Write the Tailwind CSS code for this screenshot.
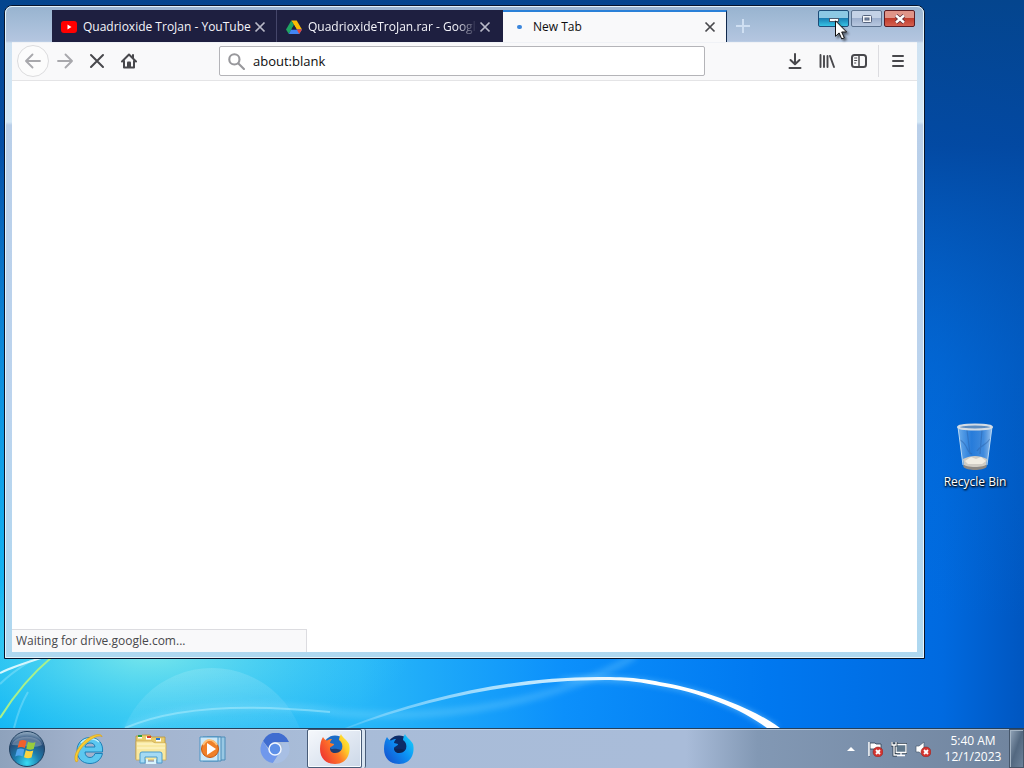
<!DOCTYPE html>
<html lang="en">

<head>
    <meta charset="UTF-8">
    <meta name="viewport" content="width=device-width, initial-scale=1.0">
    <title>New Tab</title>
    <script src="https://cdn.jsdelivr.net/npm/@tailwindcss/browser@4"></script>
</head>

<body class="h-screen flex flex-col overflow-hidden text-xs font-['Open_Sans','Noto_Sans',sans-serif]">
    <!-- Desktop -->
    <main class="relative flex-1 min-h-0 overflow-hidden bg-[#0068d8]">
        <svg class="absolute inset-0 w-full h-full" viewBox="0 0 1024 728" preserveAspectRatio="none" aria-hidden="true">
            <defs>
                <linearGradient id="sea" x1="0" x2="1" y1="0" y2="0">
                    <stop offset="0" stop-color="#14b8f4" />
                    <stop offset=".13" stop-color="#2ec4f4" />
                    <stop offset=".35" stop-color="#28b8f8" />
                    <stop offset=".55" stop-color="#0c90fb" />
                    <stop offset=".75" stop-color="#0078f0" />
                    <stop offset=".92" stop-color="#006ae0" />
                    <stop offset="1" stop-color="#0056c0" />
                </linearGradient>
                <linearGradient id="deep" x1="0" x2="0" y1="0" y2="1">
                    <stop offset="0" stop-color="#04458e" />
                    <stop offset=".2" stop-color="#0348a0" stop-opacity=".95" />
                    <stop offset=".5" stop-color="#0460c4" stop-opacity=".5" />
                    <stop offset=".85" stop-color="#0470d8" stop-opacity="0" />
                </linearGradient>
                <radialGradient id="glow">
                    <stop offset="0" stop-color="#8cf0e8" stop-opacity=".75" />
                    <stop offset="1" stop-color="#50d8f4" stop-opacity="0" />
                </radialGradient>
                <linearGradient id="arc" x1="0" x2="1" y1="0" y2="0">
                    <stop offset="0" stop-color="#fff" stop-opacity=".15" />
                    <stop offset=".35" stop-color="#e0f8ff" stop-opacity=".75" />
                    <stop offset=".7" stop-color="#fff" />
                </linearGradient>
                <linearGradient id="dome" x1="0" x2="0" y1="0" y2="1">
                    <stop offset="0" stop-color="#fff" stop-opacity=".14" />
                    <stop offset=".4" stop-color="#fff" stop-opacity=".03" />
                </linearGradient>
                <filter id="soft"><feGaussianBlur stdDeviation="3" /></filter>
                <filter id="edge"><feGaussianBlur stdDeviation="0.700" /></filter>
            </defs>
            <rect width="1024" height="728" fill="url(#sea)" />
            <rect width="1024" height="728" fill="url(#deep)" />
            <ellipse cx="150" cy="655" rx="260" ry="90" fill="url(#glow)" />
            <circle cx="212" cy="762" r="94" fill="url(#dome)" filter="url(#edge)" />
            <path d="M125 728C190 700 290 704 340 713C450 722 560 700 635 656" fill="none" stroke="#9de4ff" stroke-width="6" opacity=".3" filter="url(#soft)" />
            <path d="M125 728C170 708 240 703 330 712" fill="none" stroke="#c8f6ff" stroke-width="2" opacity=".4" filter="url(#edge)" />
            <path d="M560 679C600 676 635 678 660 683C705 690 750 708 779 728L768 728C740 708 700 692 655 685C625 680 590 680 560 681Z" fill="#8ed8ff" filter="url(#soft)" opacity=".8" />
            <path d="M345 728C430 694 520 676 605 677C635 677 650 680 665 683C708 691 752 708 780 728L767 728C740 708 700 692 655 685C635 681 620 680 605 680C520 680 430 698 349 728Z" fill="url(#arc)" filter="url(#edge)" />
            <path d="M0 673C12 667 28 662 44 657" fill="none" stroke="#e8fcff" stroke-width="2" opacity=".9" />
            <path d="M0 718C16 692 34 672 52 657" fill="none" stroke="#a8f08c" stroke-width="2" />
            <path d="M0 684C12 672 24 665 32 660M14 728C18 712 22 702 28 692" fill="none" stroke="#bff4ff" stroke-width="2" opacity=".3" filter="url(#edge)" />
        </svg>

        <!-- Browser window -->
        <section class="absolute left-1 top-[5px] right-[99px] bottom-[69px] rounded-t-lg border border-[#06142c] bg-[#b6d6f0]" aria-label="Firefox">
            <div class="h-full flex flex-col rounded-t-[7px] border border-[#e4f4fc] px-[6px] pb-[5px] bg-[linear-gradient(180deg,#98b4d0_0px,#b4c6e0_34px,#cfe2f2_36px,#d4e8f6_115px,#b9cfe9_118px,#bcd4ee_400px,#aed8f0_100%)]">
                <header class="h-[35px] shrink-0 flex items-end">
                    <div class="h-8 ml-10 flex" role="tablist">
                        <div class="w-[225px] flex items-center pl-[9px] pt-px pr-2 bg-[#1e1f40] border-r border-[#45466a] text-[#f4f4fa]">
                            <svg class="w-4 h-4 shrink-0" viewBox="0 0 16 16"><rect y="2" width="16" height="12" rx="3" fill="#f00" /><path d="M6.500 5.500v5l4-2.500z" fill="#fff" /></svg>
                            <span class="ml-[6px] flex-1 whitespace-nowrap">Quadrioxide TroJan - YouTube</span>
                            <button class="w-4 h-4" aria-label="Close tab"><svg viewBox="0 0 16 16"><path d="M3.500 3.500l9 9M12.500 3.500l-9 9" stroke="#b9b9c8" stroke-width="1.700" /></svg></button>
                        </div>
                        <div class="w-[226px] flex items-center pl-[9px] pt-px pr-[10px] bg-[#1e1f40] text-[#f4f4fa]">
                            <svg class="w-4 h-4 shrink-0" viewBox="0 0 16 16"><path d="M5.300 1.500h5.400L16 10.500h-5.200z" fill="#fbbc04" /><path d="M5.300 1.500L8 6 2.800 15 0 10.500z" fill="#1fa463" /><path d="M5.300 10.500H16L13.200 15H2.800z" fill="#4285f4" /><path d="M10.800 10.500H16L13.200 15z" fill="#ea4335" /><path d="M5.300 10.500L8 6l2.700 4.500z" fill="#1e1f40" /></svg>
                            <span class="ml-[6px] w-0 flex-1 overflow-hidden whitespace-nowrap mask-r-from-88% mask-r-to-100%">QuadrioxideTroJan.rar - Google</span>
                            <button class="w-4 h-4" aria-label="Close tab"><svg viewBox="0 0 16 16"><path d="M3.500 3.500l9 9M12.500 3.500l-9 9" stroke="#b9b9c8" stroke-width="1.700" /></svg></button>
                        </div>
                        <div class="w-[224px] flex items-center pl-[14px] pr-2 bg-[#f9f9fa] border-t-2 border-r border-t-[#2a80d8] border-r-[#10284c] text-[#0c0c0d]">
                            <span class="w-[5px] h-1 rounded-full bg-[#3a86dc]"></span>
                            <span class="ml-[11px] flex-1">New Tab</span>
                            <button class="w-4 h-4" aria-label="Close tab"><svg viewBox="0 0 16 16"><path d="M3.500 3.500l9 9M12.500 3.500l-9 9" stroke="#48484c" stroke-width="1.700" /></svg></button>
                        </div>
                    </div>
                    <button class="h-8 w-8 flex items-center justify-center" aria-label="New tab">
                        <svg class="w-4 h-4" viewBox="0 0 16 16"><path d="M8 1v14M1 8h14" stroke="#cfdff2" stroke-width="2" /></svg>
                    </button>
                    <div class="ml-auto mr-[2px] mb-[15px] flex gap-[2px]">
                        <button class="w-[31px] h-[17px] rounded-xs border border-[#1d4c78] bg-linear-to-b from-[#8cc8e4] from-45% via-[#1a7fb4] via-50% to-[#38c4e4] flex items-center justify-center" aria-label="Minimize">
                            <svg class="w-3 h-2" viewBox="0 0 12 8"><rect x="1.500" y="3.500" width="9" height="3" fill="#fff" stroke="#4a5a70" /></svg>
                        </button>
                        <button class="w-[31px] h-[17px] rounded-xs border border-[#5d7390] bg-linear-to-b from-[#c4d2e6] from-45% via-[#9db0ce] via-50% to-[#b8c8e0] flex items-center justify-center" aria-label="Maximize">
                            <svg class="w-3 h-[10px]" viewBox="0 0 12 10"><rect x="1.500" y="1.500" width="9" height="7" rx="1" fill="#f4f6fa" stroke="#56647e" /><rect x="4" y="4" width="4" height="2" fill="#8496b4" stroke="#56647e" /></svg>
                        </button>
                        <button class="w-[31px] h-[17px] rounded-xs border border-[#5a1c24] bg-linear-to-b from-[#e09488] from-45% via-[#c03c2c] via-50% to-[#d46050] flex items-center justify-center" aria-label="Close">
                            <svg class="w-3 h-[10px]" viewBox="0 0 12 10"><path d="M2 1.500l8 7M10 1.500l-8 7" stroke="#5a2c38" stroke-width="4" /><path d="M2 1.500l8 7M10 1.500l-8 7" stroke="#fff" stroke-width="2.400" /></svg>
                        </button>
                    </div>
                </header>

                <nav class="h-[39px] shrink-0 flex items-center pl-[5px] pr-[3px] pb-px bg-[#f9f9fa] border-t border-b border-t-[#f0f2f6] border-b-[#e4e4e6] text-[#48484c]">
                    <button class="w-8 h-8 shrink-0 rounded-full border border-[#dcdcde] bg-[#fcfcfc] text-[#a8a8ac] flex items-center justify-center" aria-label="Back">
                        <svg class="w-4 h-4" viewBox="0 0 16 16" fill="none" stroke="currentColor" stroke-width="1.800" stroke-linecap="round" stroke-linejoin="round"><path d="M15 8H1.500M7.500 1.500L1 8l6.500 6.500" /></svg>
                    </button>
                    <button class="w-8 h-8 shrink-0 text-[#a8a8ac] flex items-center justify-center" aria-label="Forward">
                        <svg class="w-4 h-4" viewBox="0 0 16 16" fill="none" stroke="currentColor" stroke-width="1.800" stroke-linecap="round" stroke-linejoin="round"><path d="M1 8h13.500M8.500 1.500L15 8l-6.500 6.500" /></svg>
                    </button>
                    <button class="w-8 h-8 shrink-0 flex items-center justify-center" aria-label="Stop">
                        <svg class="w-4 h-4" viewBox="0 0 16 16" fill="none" stroke="currentColor" stroke-width="2" stroke-linecap="round"><path d="M2 2l12 12M14 2L2 14" /></svg>
                    </button>
                    <button class="w-8 h-8 shrink-0 flex items-center justify-center" aria-label="Home">
                        <svg class="w-4 h-4" viewBox="0 0 16 16" fill="none" stroke="currentColor" stroke-width="2" stroke-linecap="round" stroke-linejoin="round"><path d="M1 8.500L8 1.500l7 7M3 8v6.500h10V8" /><path d="M6 14V9.500a1 1 0 011-1h2a1 1 0 011 1V14z" fill="currentColor" stroke="none" /><path d="M12 2v3" /></svg>
                    </button>
                    <label class="h-[30px] flex-1 mx-[74px] px-2 flex items-center gap-2 bg-white border border-[#b4b4b8] rounded-xs">
                        <svg class="w-[17px] h-[17px] shrink-0 text-[#98989c]" viewBox="0 0 16 16" fill="none" stroke="currentColor" stroke-width="2" stroke-linecap="round"><circle cx="6" cy="6" r="4.800" /><path d="M9.800 9.800L15 15" /></svg>
                        <input class="flex-1 min-w-0 pt-[2px] text-[13px] text-[#0c0c0d] outline-none" type="text" value="about:blank" aria-label="Address">
                    </label>
                    <button class="w-8 h-8 shrink-0 flex items-center justify-center" aria-label="Downloads">
                        <svg class="w-4 h-4" viewBox="0 0 16 16" fill="none" stroke="currentColor" stroke-width="2" stroke-linecap="round" stroke-linejoin="round"><path d="M8 1v10M3.500 7L8 11.200 12.500 7M2.500 15h11" /></svg>
                    </button>
                    <button class="w-8 h-8 shrink-0 flex items-center justify-center" aria-label="Library">
                        <svg class="w-4 h-4" viewBox="0 0 16 16" fill="none" stroke="currentColor" stroke-width="1.900" stroke-linecap="round"><path d="M1.500 2v12M5 3v11M8.500 3v11M11 3l4 11" /></svg>
                    </button>
                    <button class="w-8 h-8 shrink-0 flex items-center justify-center" aria-label="Sidebars">
                        <svg class="w-4 h-4" viewBox="0 0 16 16" fill="none" stroke="currentColor" stroke-width="2"><rect x="1" y="2" width="14" height="12" rx="2.500" /><path d="M8 2v12" stroke-width="1.500" /><path d="M3.200 5h3M3.200 7.500h3M3.200 10h2" stroke-width="1.200" /></svg>
                    </button>
                    <span class="mx-[3px] w-px h-8 bg-[#dcdce0]"></span>
                    <button class="w-8 h-8 shrink-0 flex items-center justify-center" aria-label="Menu">
                        <svg class="w-4 h-4" viewBox="0 0 16 16" stroke="currentColor" stroke-width="2" stroke-linecap="round"><path d="M3 3h10M3 8h10M3 13h10" /></svg>
                    </button>
                </nav>

                <div class="relative flex-1 min-h-0 bg-white">
                    <p class="absolute left-0 bottom-0 w-[295px] h-[23px] pl-1 flex items-center bg-[#f9f9fa] border-t border-r border-[#dcdce0] text-[#48484c]">Waiting for drive.google.com...</p>
                </div>
            </div>
        </section>

        <!-- Desktop shortcut -->
        <a href="#" class="absolute right-2 top-[422px] w-[82px] flex flex-col items-center text-white [text-shadow:0_1px_2px_#000,1px_1px_2px_#000]">
            <svg class="w-[38px] h-12" viewBox="0 0 38 48">
                <defs>
                    <linearGradient id="glass"><stop offset="0" stop-color="#a8d4f8" stop-opacity=".65" /><stop offset=".4" stop-color="#4c94e4" stop-opacity=".5" /><stop offset=".75" stop-color="#80b4ec" stop-opacity=".5" /><stop offset="1" stop-color="#c4def6" stop-opacity=".8" /></linearGradient>
                </defs>
                <path d="M2 5l5 38c2 4 22 4 24 0l5-38z" fill="url(#glass)" />
                <path d="M7 37c8-4 16-4 24 0l-1 6c-2 4-20 4-22 0z" fill="#d0ccc4" />
                <path d="M9 39l6-4 5 2 5-2 5 4-4 3H12z" fill="#f0ece2" />
                <path d="M7 42c2 4 22 4 24 0l-.5 3c-3 4-20 4-23 0z" fill="#8c8884" />
                <path d="M4 18c8 4 6 12 12 14M34 17c-4 6-10 7-13 12M11 8l3 24M26 8l-2 24" fill="none" stroke="#2b64ac" stroke-width="1.200" opacity=".5" />
                <path d="M2 5l5 38M36 5l-5 38" stroke="#b8d8f4" stroke-width="1" />
                <ellipse cx="19" cy="5" rx="17" ry="2.500" fill="#5c8cc0" stroke="#d4dce4" stroke-width="2" />
            </svg>
            <span class="mt-1">Recycle Bin</span>
        </a>

        <!-- Mouse pointer -->
        <svg class="absolute right-[177px] top-[20px] w-3 h-[20px] overflow-visible drop-shadow-[2px_2px_1px_rgba(0,0,0,0.5)]" viewBox="0 0 12 20" aria-hidden="true">
            <path d="M.5.800v15.500l3.600-3.400 2.600 6 2.600-1.100-2.600-5.800h4.900z" fill="#fff" stroke="#111" />
        </svg>
    </main>

    <!-- Taskbar -->
    <footer class="h-10 shrink-0 flex items-stretch border-t border-[#24405c] bg-[linear-gradient(90deg,#8ea2bc_0%,#a2b2cc_8%,#a8bcd8_30%,#a9bcd9_67%,#8298b4_74%,#70849e_100%)] shadow-[inset_0_1px_0_rgba(220,236,248,0.5)]">
        <button class="w-[54px] shrink-0 flex items-center justify-center" aria-label="Start">
            <svg class="w-[38px] h-[38px]" viewBox="0 0 38 38">
                <defs>
                    <radialGradient id="orb" cx=".5" cy=".9" r=".9"><stop offset="0" stop-color="#38dcf4" /><stop offset=".4" stop-color="#1c7cac" /><stop offset=".75" stop-color="#264c78" /><stop offset="1" stop-color="#9cb4c8" /></radialGradient>
                </defs>
                <circle cx="19" cy="19" r="17.500" fill="url(#orb)" stroke="#204060" />
                <path d="M4 15C7 4 31 4 34 15C26 19 13 15 4 15z" fill="#fff" opacity=".25" />
                <path d="M11.500 11c2.500-1.500 4.500-1.300 7 0l-1.700 7c-2.500-1.300-4.500-1.500-7.300-.2z" fill="#f0602c" />
                <path d="M20 11.800c2.500 1.300 5 1.400 7.500.200l-1.800 7c-2.600 1.200-4.800 1-7.400-.3z" fill="#98cc3c" />
                <path d="M9 19.500c2.600-1.400 4.800-1.200 7.300 0l-1.700 7c-2.500-1.300-4.800-1.400-7.400 0z" fill="#50a4ec" />
                <path d="M17.800 20.200c2.500 1.300 5 1.500 7.500.300l-1.800 7c-2.600 1.200-5 1-7.500-.3z" fill="#fcd440" />
            </svg>
        </button>
        <div class="ml-[5px] flex gap-[2px]">
            <button class="w-[60px] flex items-center justify-center" aria-label="Internet Explorer">
                <svg class="w-8 h-8" viewBox="0 0 32 32">
                    <path d="M29.500 20.500C28 27 23 30.500 17 30.500C9 30.500 4 25 4 17.500C4 10 9.500 4.500 17 4.500C25.500 4.500 30.500 10.500 29.500 19H12c0 3.500 2 5.500 5 5.500c2.500 0 4-1.500 5-4zM12 14h10c-.5-3-2-4-5-4s-4.500 1.500-5 4z" fill="#5cc8f0" stroke="#1c80b8" />
                    <path d="M8 10c4-5 13-6 18-1" stroke="#c0f0fc" stroke-width="1.500" fill="none" />
                    <path d="M3 29C-1 23 6 12 14 6C21 1 29 0 29 4c-1-2-7-1-13 4C9 13 2 22 5 28z" fill="#f8cc30" stroke="#d89c18" stroke-width=".6" />
                </svg>
            </button>
            <button class="w-[60px] flex items-center justify-center" aria-label="Windows Explorer">
                <svg class="w-8 h-8" viewBox="0 0 32 32">
                    <path d="M1 3h5l1-1h8l2 2h13v22H1z" fill="#e8cc6c" stroke="#b89440" stroke-width=".8" />
                    <path d="M3 4h4M11 5h5M21 7h5" stroke="#fff" stroke-width="3" />
                    <path d="M3 3h4" stroke="#2c9c3c" stroke-width="2" /><path d="M12 4h4" stroke="#d83c2c" stroke-width="2" /><path d="M21 6h4" stroke="#2c78d0" stroke-width="2" />
                    <path d="M1 8h16l3 2h11v17H1z" fill="#f8e8a0" stroke="#cca850" stroke-width=".8" />
                    <path d="M2 11h28M2 15h28" stroke="#fff8d0" />
                    <path d="M5 30V21q0-2 2-2h18q2 0 2 2v9h-5v-6H10v6z" fill="#a4daf4" stroke="#4c9ccc" />
                    <path d="M12 26v4h8v-4" fill="none" stroke="#d8f4fc" stroke-width="2" />
                </svg>
            </button>
            <button class="w-[60px] flex items-center justify-center" aria-label="Windows Media Player">
                <svg class="w-8 h-8" viewBox="0 0 32 32">
                    <path d="M10 4h18v23H10z" fill="#98c8e4" stroke="#4c8cb8" /><path d="M6 4h18v24H6z" fill="#b8dcf0" stroke="#4c8cb8" /><path d="M3 4h18v24H3z" fill="#cce8f8" stroke="#4c94c4" />
                    <circle cx="13" cy="16" r="8.500" fill="#f08028" stroke="#c85810" />
                    <path d="M6 12C10 5 16 6 20 12" fill="none" stroke="#fcc078" stroke-width="2" />
                    <path d="M10 10v12l9-6z" fill="#fff" />
                </svg>
            </button>
            <button class="w-[60px] flex items-center justify-center" aria-label="Chromium">
                <svg class="w-8 h-8" viewBox="0 0 32 32">
                    <path d="M4 8A14 14 0 0130 9H16a6 6 0 00-5 8z" fill="#3f6cd0" />
                    <path d="M4 8A14 14 0 0014 30L21 19.500a6 6 0 01-10-.5z" fill="#7098ec" />
                    <path d="M22 10h7A14 14 0 0114 30l7-11a6 6 0 001-9z" fill="#a8bfe4" />
                    <circle cx="16" cy="16" r="6" fill="#5e90e8" stroke="#f0f6ff" stroke-width="1.500" />
                </svg>
            </button>
            <button class="w-[60px] flex items-stretch" aria-label="Firefox">
                <span class="w-[55px] flex items-center justify-center rounded-xs border border-[#485c78] bg-linear-to-br from-[#f6f8fc] to-[#ccd8e8] shadow-[inset_0_0_0_1px_#f8fcff]">
                    <svg class="w-8 h-8" viewBox="0 0 32 32">
                        <defs>
                            <linearGradient id="fox" x1="1" x2="0" y1="0" y2=".6"><stop offset="0" stop-color="#fff44c" /><stop offset=".3" stop-color="#ffd028" /><stop offset=".6" stop-color="#ff7828" /><stop offset="1" stop-color="#f03c30" /></linearGradient>
                        </defs>
                        <circle cx="16" cy="14" r="11.500" fill="#1a6cc8" />
                        <path d="M4 4c1 2 2 3 4 3.500C10 6 12 6 13 6c-1 1-2 3-2 4l4 1c0 2-3 2-4 4 0 3 3 5 6 4s5-1 6-3c1-4 0-7-3-9C20 5 21 3 22 1c1 3 6 6 8 10 2 8-1 20-14 20C7 31 1 25 1 16 1 11 2 7 4 4z" fill="url(#fox)" />
                        <path d="M11 15c2 2 5 0 7 1 2 0 3 1 4 1-1 2-3 3-6 3-3 0-5-2-5-5z" fill="#203c70" />
                    </svg>
                </span>
                <span class="w-1 rounded-r-xs border-r border-[#485c78] bg-[#d8e4f0]"></span>
            </button>
            <button class="w-[60px] flex items-center justify-center" aria-label="Firefox Developer Edition">
                <svg class="w-8 h-8" viewBox="0 0 32 32">
                    <defs>
                        <linearGradient id="wolf" x1="1" x2="0" y1="0" y2=".8"><stop offset="0" stop-color="#18d8fc" /><stop offset=".5" stop-color="#0c90f4" /><stop offset="1" stop-color="#1454d0" /></linearGradient>
                    </defs>
                    <circle cx="16" cy="14" r="11.500" fill="#0c2c68" />
                    <path d="M4 4c1 2 2 3 4 3.500C10 6 12 6 13 6c-1 1-2 3-2 4l4 1c0 2-3 2-4 4 0 3 3 5 6 4s5-1 6-3c1-4 0-7-3-9C20 5 21 3 22 1c1 3 6 6 8 10 2 8-1 20-14 20C7 31 1 25 1 16 1 11 2 7 4 4z" fill="url(#wolf)" />
                    <path d="M11 15c2 2 5 0 7 1 2 0 3 1 4 1-1 2-3 3-6 3-3 0-5-2-5-5z" fill="#0c2454" />
                </svg>
            </button>
        </div>
        <div class="ml-auto flex items-center">
            <button class="w-4 h-6 flex items-center justify-center" aria-label="Show hidden icons">
                <svg class="w-2 h-1" viewBox="0 0 8 4"><path d="M4 0l4 4H0z" fill="#fff" /></svg>
            </button>
            <div class="ml-2 flex gap-2">
                <button class="w-4 h-4" aria-label="Action Center">
                    <svg class="w-4 h-4" viewBox="0 0 16 16"><path d="M2.500 1v14.500M3 2h5l1 1h5v6H9L8 8H3z" fill="#fff" stroke="#2c3c50" stroke-width=".8" /><path d="M2 1v14" stroke="#fff" stroke-width="1.500" /><circle cx="11" cy="11" r="5" fill="#d43430" stroke="#84201c" stroke-width=".5" /><path d="M9 9l4 4M13 9l-4 4" stroke="#fff" stroke-width="1.800" /></svg>
                </button>
                <button class="w-4 h-4" aria-label="Network">
                    <svg class="w-4 h-4" viewBox="0 0 16 16"><path d="M5 3.500h10v8H5z" fill="#5c7488" stroke="#283848" stroke-width="3" /><path d="M5 3.500h10v8H5zM10 12v2M6 14.500h8" fill="#60788c" stroke="#fff" stroke-width="1.300" /><path d="M1 1v3h4V1M3 4v10h3" fill="none" stroke="#283848" stroke-width="2.800" /><path d="M1 1v3h4V1M3 4v10h3" fill="none" stroke="#fff" stroke-width="1.300" /></svg>
                </button>
                <button class="w-4 h-4" aria-label="Volume">
                    <svg class="w-4 h-4" viewBox="0 0 16 16"><path d="M1 5h3l5-4v14l-5-4H1z" fill="#fff" stroke="#4c5c70" stroke-width=".7" /><circle cx="11" cy="11" r="5" fill="#d43430" stroke="#84201c" stroke-width=".5" /><path d="M9 9l4 4M13 9l-4 4" stroke="#fff" stroke-width="1.800" /></svg>
                </button>
            </div>
            <time class="ml-[6px] w-[72px] pt-px text-center leading-4 text-white" datetime="2023-12-01T05:40">5:40 AM<br>12/1/2023</time>
            <button class="w-[15px] h-full border border-[#46566a] bg-linear-to-br from-[#94a6ba] via-[#536880] to-[#6d829a] shadow-[inset_1px_1px_0_#a4b4c4]" aria-label="Show desktop"></button>
        </div>
    </footer>
</body>

</html>
